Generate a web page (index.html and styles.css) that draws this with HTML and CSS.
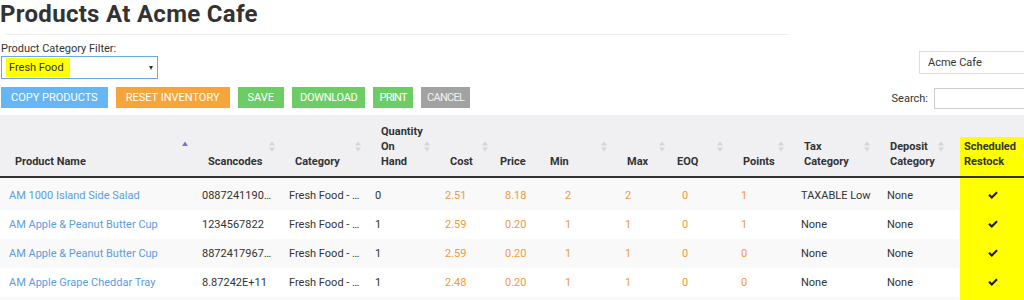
FILE: index.html
```html
<!DOCTYPE html>
<html lang="en">

<head>
    <meta charset="UTF-8">
    <title>Products At Acme Cafe</title>
    <link rel="stylesheet" href="styles.css">
</head>

<body>
<h1 class="page-title">Products At Acme Cafe</h1>
<div class="title-rule"></div>

<div class="filter-row">
    <div class="filter">
        <label class="filter-label">Product Category Filter:</label>
        <div class="select category-select">
            <span class="highlight">Fresh Food</span>
            <span class="caret"></span>
        </div>
    </div>
    <div class="select store-select">Acme Cafe</div>
</div>

<div class="toolbar">
    <div class="actions">
        <button class="btn btn-blue">Copy Products</button>
        <button class="btn btn-orange">Reset Inventory</button>
        <button class="btn btn-green">Save</button>
        <button class="btn btn-green btn-narrow">Download</button>
        <button class="btn btn-green btn-tight">Print</button>
        <button class="btn btn-gray btn-tight">Cancel</button>
    </div>
    <div class="search">
        <label>Search:</label>
        <input type="text">
    </div>
</div>

<table class="products">
    <colgroup>
        <col style="width:199px"><col style="width:87px"><col style="width:86px"><col style="width:69px">
        <col style="width:50px"><col style="width:50px"><col style="width:77px"><col style="width:50px">
        <col style="width:66px"><col style="width:61px"><col style="width:86px"><col style="width:79px">
        <col style="width:80px">
    </colgroup>
    <thead>
    <tr>
        <th class="c-name">Product Name<span class="sort sort-asc"><svg width="6" height="11" viewBox="0 0 6 11"><polygon points="0,5 3,0.5 6,5" fill="#7474d8"/></svg></span></th>
        <th class="c-scan">Scancodes<span class="sort"><svg width="6" height="11" viewBox="0 0 6 11"><polygon points="0,4.5 3,0.5 6,4.5"/><polygon points="0,6.5 3,10.5 6,6.5"/></svg></span></th>
        <th class="c-cat">Category<span class="sort"><svg width="6" height="11" viewBox="0 0 6 11"><polygon points="0,4.5 3,0.5 6,4.5"/><polygon points="0,6.5 3,10.5 6,6.5"/></svg></span></th>
        <th class="c-qty">Quantity<br>On<br>Hand<span class="sort"><svg width="6" height="11" viewBox="0 0 6 11"><polygon points="0,4.5 3,0.5 6,4.5"/><polygon points="0,6.5 3,10.5 6,6.5"/></svg></span></th>
        <th class="c-cost">Cost<span class="sort"><svg width="6" height="11" viewBox="0 0 6 11"><polygon points="0,4.5 3,0.5 6,4.5"/><polygon points="0,6.5 3,10.5 6,6.5"/></svg></span></th>
        <th class="c-price">Price<span class="sort"><svg width="6" height="11" viewBox="0 0 6 11"><polygon points="0,4.5 3,0.5 6,4.5"/><polygon points="0,6.5 3,10.5 6,6.5"/></svg></span></th>
        <th class="c-min">Min<span class="sort"><svg width="6" height="11" viewBox="0 0 6 11"><polygon points="0,4.5 3,0.5 6,4.5"/><polygon points="0,6.5 3,10.5 6,6.5"/></svg></span></th>
        <th class="c-max">Max<span class="sort"><svg width="6" height="11" viewBox="0 0 6 11"><polygon points="0,4.5 3,0.5 6,4.5"/><polygon points="0,6.5 3,10.5 6,6.5"/></svg></span></th>
        <th class="c-eoq">EOQ<span class="sort"><svg width="6" height="11" viewBox="0 0 6 11"><polygon points="0,4.5 3,0.5 6,4.5"/><polygon points="0,6.5 3,10.5 6,6.5"/></svg></span></th>
        <th class="c-points">Points<span class="sort"><svg width="6" height="11" viewBox="0 0 6 11"><polygon points="0,4.5 3,0.5 6,4.5"/><polygon points="0,6.5 3,10.5 6,6.5"/></svg></span></th>
        <th class="c-tax">Tax<br>Category<span class="sort"><svg width="6" height="11" viewBox="0 0 6 11"><polygon points="0,4.5 3,0.5 6,4.5"/><polygon points="0,6.5 3,10.5 6,6.5"/></svg></span></th>
        <th class="c-dep">Deposit<br>Category<span class="sort"><svg width="6" height="11" viewBox="0 0 6 11"><polygon points="0,4.5 3,0.5 6,4.5"/><polygon points="0,6.5 3,10.5 6,6.5"/></svg></span></th>
        <th class="c-restock">Scheduled<br>Restock<span class="sort"><svg width="6" height="11" viewBox="0 0 6 11"><polygon points="0,4.5 3,0.5 6,4.5"/><polygon points="0,6.5 3,10.5 6,6.5"/></svg></span></th>
    </tr>
    </thead>
    <tbody>
    <tr>
        <td class="c-name"><a href="#">AM 1000 Island Side Salad</a></td>
        <td class="c-scan">0887241190…</td>
        <td class="c-cat">Fresh Food - …</td>
        <td class="c-qty">0</td>
        <td class="c-cost num">2.51</td>
        <td class="c-price num">8.18</td>
        <td class="c-min num">2</td>
        <td class="c-max num">2</td>
        <td class="c-eoq num">0</td>
        <td class="c-points num">1</td>
        <td class="c-tax">TAXABLE Low</td>
        <td class="c-dep">None</td>
        <td class="c-restock"><svg class="check" width="10" height="9" viewBox="0 0 10 9"><path d="M0.3 4.6 L1.9 3.1 L3.8 5 L8.3 0.4 L9.8 1.9 L3.8 8 Z"/></svg></td>
    </tr>
    <tr>
        <td class="c-name"><a href="#">AM Apple &amp; Peanut Butter Cup</a></td>
        <td class="c-scan">1234567822</td>
        <td class="c-cat">Fresh Food - …</td>
        <td class="c-qty">1</td>
        <td class="c-cost num">2.59</td>
        <td class="c-price num">0.20</td>
        <td class="c-min num">1</td>
        <td class="c-max num">1</td>
        <td class="c-eoq num">0</td>
        <td class="c-points num">1</td>
        <td class="c-tax">None</td>
        <td class="c-dep">None</td>
        <td class="c-restock"><svg class="check" width="10" height="9" viewBox="0 0 10 9"><path d="M0.3 4.6 L1.9 3.1 L3.8 5 L8.3 0.4 L9.8 1.9 L3.8 8 Z"/></svg></td>
    </tr>
    <tr>
        <td class="c-name"><a href="#">AM Apple &amp; Peanut Butter Cup</a></td>
        <td class="c-scan">8872417967…</td>
        <td class="c-cat">Fresh Food - …</td>
        <td class="c-qty">1</td>
        <td class="c-cost num">2.59</td>
        <td class="c-price num">0.20</td>
        <td class="c-min num">1</td>
        <td class="c-max num">1</td>
        <td class="c-eoq num">0</td>
        <td class="c-points num">0</td>
        <td class="c-tax">None</td>
        <td class="c-dep">None</td>
        <td class="c-restock"><svg class="check" width="10" height="9" viewBox="0 0 10 9"><path d="M0.3 4.6 L1.9 3.1 L3.8 5 L8.3 0.4 L9.8 1.9 L3.8 8 Z"/></svg></td>
    </tr>
    <tr>
        <td class="c-name"><a href="#">AM Apple Grape Cheddar Tray</a></td>
        <td class="c-scan">8.87242E+11</td>
        <td class="c-cat">Fresh Food - …</td>
        <td class="c-qty">1</td>
        <td class="c-cost num">2.48</td>
        <td class="c-price num">0.20</td>
        <td class="c-min num">1</td>
        <td class="c-max num">1</td>
        <td class="c-eoq num">0</td>
        <td class="c-points num">0</td>
        <td class="c-tax">None</td>
        <td class="c-dep">None</td>
        <td class="c-restock"><svg class="check" width="10" height="9" viewBox="0 0 10 9"><path d="M0.3 4.6 L1.9 3.1 L3.8 5 L8.3 0.4 L9.8 1.9 L3.8 8 Z"/></svg></td>
    </tr>
    <tr>
        <td class="c-name"></td><td></td><td></td><td></td><td></td><td></td><td></td>
        <td></td><td></td><td></td><td></td><td></td><td class="c-restock"></td>
    </tr>
    </tbody>
</table>
</body>

</html>
```

FILE: styles.css
```css
html, body {
    overflow: hidden;
}

body {
    margin: 0;
    font-family: Roboto, "Noto Sans", Arial, sans-serif;
    font-size: 11px;
    color: #333;
    background-color: #fff;
}

.page-title {
    margin: 0;
    font-size: 24px;
    line-height: 28.2px;
    font-weight: 700;
    letter-spacing: 0.3px;
    color: #333;
}

.title-rule {
    margin: 6px 0 0 5px;
    width: 784px;
    border-top: 1px solid #eee;
}

.filter-row {
    display: flex;
    justify-content: space-between;
    align-items: flex-start;
    margin-top: 6px;
}

.filter-label {
    display: block;
    line-height: 15px;
    padding-left: 1px;
}

.select {
    box-sizing: border-box;
    height: 23px;
    background-color: #fff;
}

.category-select {
    display: flex;
    align-items: center;
    width: 157px;
    margin-left: 1px;
    padding: 0 4px 0 4px;
    border: 1px solid #6aa9e6;
}

.highlight {
    background-color: #ffff00;
    line-height: 19px;
    padding: 0 6px 0 3px;
}

.caret {
    margin-left: auto;
    width: 0;
    height: 0;
    border-left: 2.5px solid transparent;
    border-right: 2.5px solid transparent;
    border-top: 4px solid #333;
}

.store-select {
    width: 115px;
    margin-top: 10px;
    margin-right: -10px;
    padding-left: 8px;
    line-height: 21px;
    border: 1px solid #ddd;
}

.toolbar {
    display: flex;
    justify-content: space-between;
    align-items: flex-start;
    margin-top: 8px;
}

.actions {
    display: flex;
    gap: 8px;
    padding-left: 1px;
}

.btn {
    height: 21px;
    padding: 0 10px;
    border: none;
    color: white;
    font-family: Roboto, "Noto Sans", Arial, sans-serif;
    font-size: 11px;
    text-transform: uppercase;
    cursor: pointer;
}

.btn-narrow {
    padding: 0 8px;
    letter-spacing: -0.3px;
}

.btn-tight {
    padding: 0 6px;
    letter-spacing: -0.7px;
}

.btn-blue {
    background-color: #66b6f6;
}

.btn-orange {
    background-color: #f6a53b;
}

.btn-green {
    background-color: #6ccd64;
}

.btn-gray {
    background-color: #a2a2a2;
    color: #f2f2f2;
}

.search {
    display: flex;
    align-items: flex-start;
    margin-right: -20px;
}

.search label {
    margin-top: 1px;
    line-height: 21px;
}

.search input {
    box-sizing: border-box;
    width: 110px;
    height: 21px;
    margin: 1px 0 0 6px;
    border: 1px solid #ccc;
    outline: none;
}

/* product table */
.products {
    margin-top: 6px;
    width: 1040px;
    table-layout: fixed;
    border-collapse: collapse;
}

.products th {
    position: relative;
    padding: 9px 12px 7px 9px;
    background-color: #f0f0f3;
    border-bottom: 2px solid #333;
    text-align: left;
    vertical-align: bottom;
    font-weight: 700;
    line-height: 15px;
    white-space: nowrap;
}

.products td {
    padding: 7px 4px 7px 6px;
    line-height: 15px;
    height: 15px;
    white-space: nowrap;
    overflow: hidden;
}

.products tbody tr:nth-child(odd) td {
    background-color: #f9f9f9;
}

.products tbody tr:first-child td {
    padding-top: 10px;
}

.products a {
    color: #5c9ce0;
    text-decoration: none;
}

.products .num {
    color: #ef993c;
}

.sort {
    position: absolute;
    top: 50%;
    right: 11px;
    margin-top: -5px;
    line-height: 0;
}

.sort svg {
    fill: #d6d6da;
}

.check {
    display: block;
    fill: #1e1e1e;
}

/* per-column offsets */
th.c-name { padding-left: 15px; }
th.c-cost .sort, th.c-max .sort { right: 3px; }
th.c-price .sort { right: -7px; }
th.c-dep .sort { right: 16px; }

td.c-name { padding-left: 9px; }
td.c-scan, td.c-cat, td.c-qty { padding-left: 3px; }
td.c-cost { padding-left: 4px; }
td.c-price, td.c-eoq { padding-left: 14px; }
td.c-min { padding-left: 24px; }
td.c-max, td.c-points { padding-left: 7px; }

.products th.c-restock {
    padding-left: 4px;
    background: linear-gradient(#f0f0f3 22px, #ffff00 22px);
}

.products tbody tr td.c-restock {
    padding-left: 28px;
    background-color: #ffff00;
}
```
